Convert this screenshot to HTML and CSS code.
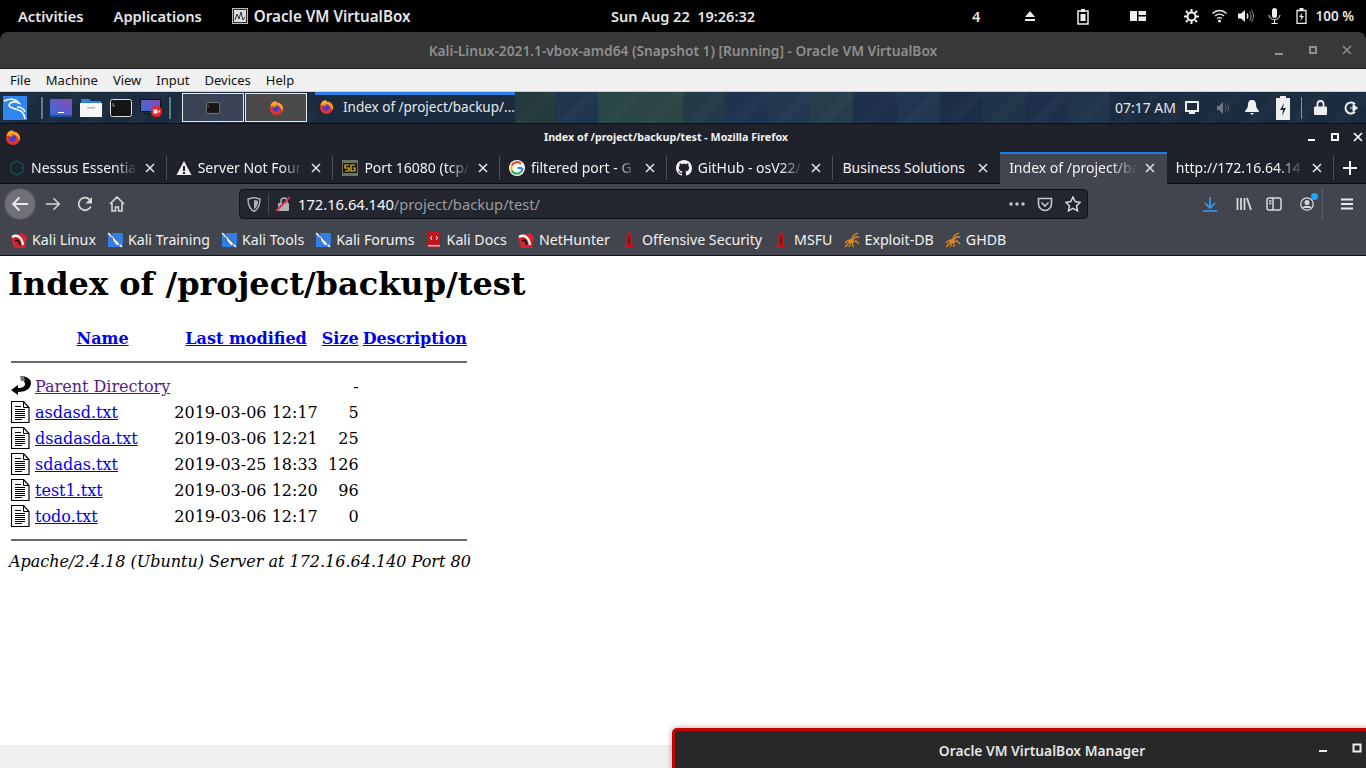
FILE: index.html
```html
<!DOCTYPE html>
<html lang="en">
<head>
<meta charset="UTF-8">
<meta name="viewport" content="width=device-width, initial-scale=1.0">
<title>Index of /project/backup/test</title>
<link rel="stylesheet" href="styles.css">
</head>
<body>

<svg class="defs">
  <symbol id="firefox" viewBox="0 0 16 16">
    <circle cx="8" cy="9" r="7" fill="#e8322f"/>
    <path d="M1.500 7C2 3 5 1 8 1.500 7.500 3 9 3.500 10 3c3 1 5 3.500 5 6 0 1-.3 2-1 3-.5-4-3-6-6-6S3 6 1.500 7z" fill="#f9a825"/>
    <circle cx="7.500" cy="9" r="3.500" fill="#4a3fc4"/>
    <path d="M3 6.500 5 5l3 1-2 2z" fill="#ff8a1f"/>
  </symbol>
  <symbol id="close" viewBox="0 0 10 10">
    <path d="M1 1l8 8M9 1l-8 8" stroke="currentColor" stroke-width="1.600" fill="none"/>
  </symbol>
  <symbol id="kali-red" viewBox="0 0 16 16">
    <path d="M0 5 12 1l4 4-2 11H3z" fill="#d8232a"/>
    <path d="M1 5c5-3 10 0 11 8" stroke="#f4f4f4" stroke-width="2.400" fill="none"/>
    <path d="M4 9c3-2 4 0 5 4" stroke="#1a1a1a" stroke-width="2" fill="none"/>
  </symbol>
  <symbol id="kali-blue" viewBox="0 0 16 16">
    <path d="M3 1h13v12l-2 2H1V4z" fill="#2f7fe6"/>
    <path d="M1 1l14 14" stroke="#fff" stroke-width="1.500"/>
    <path d="M4 1l4 6 5 5-3 2-4-5z" fill="#e8eef5" stroke="#223" stroke-width=".5"/>
  </symbol>
  <symbol id="doc-red" viewBox="0 0 16 16">
    <path d="M2 0h12v16H2z" fill="#c4141b"/>
    <path d="M6 4 4.500 6 6 8M10 4l1.500 2L10 8" stroke="#fff" fill="none"/>
    <path d="M2 13h12v1.500H2z" fill="#f4b6b8"/>
  </symbol>
  <symbol id="rocket" viewBox="0 0 16 16">
    <path d="M8 0c2 1 2.500 3 2.500 5v6l2.500 5H3l2.500-5V5C5.500 3 6 1 8 0z" fill="#c4141b"/>
    <path d="M7.500 4h1v9h-1z" fill="#2a1010"/>
  </symbol>
  <symbol id="spider" viewBox="0 0 16 16">
    <g stroke="#e08a1e" stroke-width="1.300" fill="none">
      <path d="M7 8 10 3l4-2M8 9l3-4 4 0M8 10l4-1 3 3M6 9 3 13l-2 2M7 10l-1 3-1 2M8 10l1 3 0 2M6 8 3 9l-2 2"/>
    </g>
    <ellipse cx="7" cy="9" rx="2.500" ry="2" fill="#e08a1e"/>
  </symbol>
  <symbol id="page-icon" viewBox="0 0 20 22">
    <path d="M.5.500h12l5.500 6v15H.5z" fill="#fff" stroke="#000" stroke-width="1.200"/>
    <path d="M12.500.500v6H18" fill="none" stroke="#000"/>
    <path d="M4 5.500h6M4 8.500h10M4 10.500h10M4 12.500h10M4 14.500h10M4 16.500h10M4 18.500h7" stroke="#000" shape-rendering="crispEdges"/>
  </symbol>
</svg>

<div class="screen">

  <header class="topbar">
    <span class="top-item activities">Activities</span>
    <span class="top-item applications">Applications</span>
    <svg class="app-icon" viewBox="0 0 16 16"><rect x=".5" y=".5" width="15" height="15" fill="#2c2c2c" stroke="#bbb"/><rect x="2" y="2" width="12" height="12" fill="#ddd"/><path d="M3 12l2-6 2 5 2-7 2 8 2-3" stroke="#333" fill="none"/></svg>
    <span class="top-item top-app">Oracle VM VirtualBox</span>
    <span class="clock">Sun Aug 22&nbsp; 19:26:32</span>
    <div class="tray">
      <span class="tray-num">4</span>
      <svg class="tray-eject" width="12" height="12" viewBox="0 0 12 12"><path d="M6 1l5 6H1zM1 9h10v2H1z" fill="#eee"/></svg>
      <svg class="tray-clip" width="12" height="17" viewBox="0 0 12 17"><path d="M1 3h10v13H1z" fill="none" stroke="#eee" stroke-width="1.500"/><path d="M4 1h4v3H4zM3.500 6h5v7h-5z" fill="#eee"/></svg>
      <svg class="tray-layout" width="16" height="10" viewBox="0 0 16 10"><path d="M0 0h7v10H0zM8.500 0H16v4H8.500zM8.500 5.500H16V10H8.500z" fill="#eee"/></svg>
      <svg class="tray-gear" width="15" height="15" viewBox="0 0 15 15"><circle cx="7.500" cy="7.500" r="4" fill="none" stroke="#eee" stroke-width="2"/><path d="M7.500 0v3M7.500 12v3M0 7.500h3M12 7.500h3M2 2l2 2M11 11l2 2M13 2l-2 2M4 11l-2 2" stroke="#eee" stroke-width="2"/></svg>
      <svg class="tray-wifi" width="15" height="14" viewBox="0 0 15 14"><path d="M.5 4.500c4-4 10-4 14 0M3 7c3-2.500 6-2.500 9 0M5 9.500c1.500-1 3.500-1 5 0" stroke="#eee" stroke-width="1.300" fill="none"/><circle cx="7.500" cy="12" r="1.500" fill="#eee"/></svg>
      <svg class="tray-vol" width="16" height="14" viewBox="0 0 16 14"><path d="M0 4.500h3L7 1v12L3 9.500H0z" fill="#eee"/><path d="M9 4.500c1 1.500 1 3.500 0 5" stroke="#eee" stroke-width="1.300" fill="none"/><path d="M11.500 2.500c2 2.500 2 6.500 0 9M13.500 1c2.500 3.500 2.500 8.500 0 12" stroke="#777" stroke-width="1.200" fill="none"/></svg>
      <svg class="tray-mic" width="13" height="16" viewBox="0 0 13 16"><rect x="4" y="0" width="5" height="10" rx="2.500" fill="#eee"/><path d="M1 7c0 6 11 6 11 0M6.500 12v3M3.500 15.500h6" stroke="#eee" fill="none"/></svg>
      <svg class="tray-batt" width="11" height="16" viewBox="0 0 11 16"><path d="M1 2.500h9v13H1z" fill="none" stroke="#eee" stroke-width="1.300"/><path d="M3.500 0h4v2h-4zM6.500 4.500 3 9h2.500L4.500 13 8 8H5.500z" fill="#eee"/></svg>
      <span class="tray-pct">100 %</span>
    </div>
  </header>

  <div class="vbox-title">
    <span class="vbox-name">Kali-Linux-2021.1-vbox-amd64 (Snapshot 1) [Running] - Oracle VM VirtualBox</span>
    <div class="vbox-buttons">
      <svg width="10" height="10" viewBox="0 0 10 10"><path d="M1 8h8v2H1z" fill="#8f8f8f"/></svg>
      <svg width="10" height="10" viewBox="0 0 10 10"><path d="M2 2h6v6H2z" fill="none" stroke="#8f8f8f" stroke-width="2"/></svg>
      <svg width="10" height="10" viewBox="0 0 10 10" class="grey-x"><use href="#close"/></svg>
    </div>
  </div>

  <nav class="vbox-menu">
    <span>File</span><span>Machine</span><span>View</span><span>Input</span><span>Devices</span><span>Help</span>
  </nav>

  <div class="kali-panel">
    <svg class="kali-logo" viewBox="0 0 24 24"><rect width="24" height="24" fill="#2f86f0"/><path d="M1 5c6-3 12-2 15 2-5-2-9-1-10 2 0 4 9 3 13 7 2 2 3 5 3 7M14 11c4 0 7 2 8 5" stroke="#fff" stroke-width="1.600" fill="none"/></svg>
    <span class="panel-sep"></span>
    <svg class="launcher" viewBox="0 0 22 18"><defs><linearGradient id="scr" x1="0" y1="1" x2="1" y2="0"><stop offset="0" stop-color="#2f6fd8"/><stop offset="1" stop-color="#8a4bb8"/></linearGradient></defs><rect width="22" height="17" fill="url(#scr)"/><rect y="16" width="22" height="2" fill="#1d4fa0"/><path d="M8 13h6v1H8z" fill="#fff"/></svg>
    <svg class="launcher" viewBox="0 0 22 18"><path d="M1 0h8l2 2h10v4H1z" fill="#2f7fe6"/><path d="M0 4h22v14H0z" fill="#f6f6f6"/><path d="M7 8h8v1.500H7z" fill="#bbb"/></svg>
    <svg class="launcher" viewBox="0 0 22 18"><rect x=".5" y=".5" width="21" height="17" rx="2" fill="#151515" stroke="#ddd"/><path d="M3 4v3h2" stroke="#999" fill="none"/></svg>
    <svg class="launcher" viewBox="0 0 22 18"><rect x=".5" y=".5" width="20" height="12" fill="url(#scr)" stroke="#111"/><path d="M4 14h10v1H4z" fill="#111"/><circle cx="16.500" cy="12.500" r="5.500" fill="#e8232a"/><path d="M13.500 10.500h4v4h-4zM18 12.500l2-1.500v3z" fill="#fff"/></svg>
    <span class="panel-sep second"></span>
    <div class="task-btn">
      <svg width="14" height="12" viewBox="0 0 22 18"><rect x=".5" y=".5" width="21" height="17" rx="2" fill="#151515" stroke="#aaa"/><path d="M3 4v3h2" stroke="#999" fill="none"/></svg>
    </div>
    <div class="task-btn fox">
      <svg width="15" height="15"><use href="#firefox"/></svg>
    </div>
    <div class="task-window">
      <svg width="15" height="15"><use href="#firefox"/></svg>
      <span>Index of /project/backup/...</span>
    </div>
    <div class="panel-right">
      <span class="panel-clock">07:17 AM</span>
      <svg class="pr-net" width="14" height="13" viewBox="0 0 14 13"><path d="M1 1h12v9H1zM4 12h6" fill="none" stroke="#eee" stroke-width="2"/></svg>
      <svg class="pr-vol" width="14" height="14" viewBox="0 0 14 14"><path d="M1 5h2l4-4v12L3 9H1z" fill="#6d7885"/><path d="M9 4c1.500 2 1.500 4 0 6M11 2.500c2 3 2 6 0 9" stroke="#55606d" fill="none"/></svg>
      <svg class="pr-bell" width="14" height="15" viewBox="0 0 14 15"><path d="M7 0c3 0 4 2 4 5 0 3 2 5 3 6v1H0v-1c1-1 3-3 3-6 0-3 1-5 4-5zM5 13h4l-2 2z" fill="#f2f2f2"/></svg>
      <svg class="pr-batt" width="14" height="24" viewBox="0 0 14 24"><path d="M4 0h6v2h4v22H0V2h4z" fill="#eee"/><path d="M8 7 4 14h3l-1 6 4-8H7z" fill="#1d2d40"/></svg>
      <span class="pr-sep"></span>
      <svg class="pr-lock" width="13" height="15" viewBox="0 0 13 15"><path d="M3.500 7V4a3 3 0 016 0v3" fill="none" stroke="#eee" stroke-width="1.800"/><rect y="6.500" width="13" height="8.500" rx="1" fill="#eee"/></svg>
      <svg class="pr-power" width="14" height="14" viewBox="0 0 14 14"><path d="M11 3.200A5.500 5.500 0 1 0 11 10.800" fill="none" stroke="#eee" stroke-width="2"/><path d="M6 7h5M9 3.500 13.500 7 9 10.500z" fill="#eee" stroke="#eee"/></svg>
    </div>
  </div>

  <div class="ff-title">
    <svg class="ff-logo" width="16" height="16"><use href="#firefox"/></svg>
    <span class="ff-name">Index of /project/backup/test - Mozilla Firefox</span>
    <div class="ff-buttons">
      <svg width="10" height="10" viewBox="0 0 10 10"><path d="M1 7h7v2H1z" fill="#fff"/></svg>
      <svg width="10" height="10" viewBox="0 0 10 10"><path d="M2 2h6v6H2z" fill="none" stroke="#fff" stroke-width="2"/></svg>
      <svg width="10" height="10" viewBox="0 0 10 10" class="white-x"><use href="#close"/></svg>
    </div>
  </div>

  <div class="tabbar">
    <div class="tab">
      <svg class="tab-icon" viewBox="0 0 16 16"><path d="M8 1l6 3.500v7L8 15l-6-3.500v-7z" fill="none" stroke="#0f5468" stroke-width="1.300"/></svg>
      <span class="tab-label">Nessus Essentia</span>
      <svg class="tab-close"><use href="#close"/></svg>
    </div>
    <div class="tab">
      <svg class="tab-icon" viewBox="0 0 16 16"><path d="M8 1l7.500 14H.5z" fill="#f2f2f2"/><path d="M7 6h2v5H7zM7 12h2v2H7z" fill="#1f222b"/></svg>
      <span class="tab-label">Server Not Foun</span>
      <svg class="tab-close"><use href="#close"/></svg>
    </div>
    <div class="tab">
      <svg class="tab-icon" viewBox="0 0 16 16"><rect width="16" height="16" fill="#6b7266"/><rect x="1" y="3" width="14" height="10" fill="#16180f"/><path d="M7 5H3v3h4v3H3M13 5H9v6h4V8h-2" stroke="#f0c020" stroke-width="1.200" fill="none"/></svg>
      <span class="tab-label">Port 16080 (tcp/</span>
      <svg class="tab-close"><use href="#close"/></svg>
    </div>
    <div class="tab">
      <svg class="tab-icon" viewBox="0 0 16 16"><circle cx="8" cy="8" r="8" fill="#fff"/><path d="M13 8H8.500" stroke="#4285f4" stroke-width="2.200"/><path d="M12 3.800A5.700 5.700 0 002.800 5.500" stroke="#ea4335" stroke-width="2.200" fill="none"/><path d="M2.800 5.500a5.700 5.700 0 000 5" stroke="#fbbc05" stroke-width="2.200" fill="none"/><path d="M2.800 10.500A5.700 5.700 0 0012 12" stroke="#34a853" stroke-width="2.200" fill="none"/><path d="M12 12a5.700 5.700 0 001.500-4" stroke="#4285f4" stroke-width="2.200" fill="none"/></svg>
      <span class="tab-label">filtered port - G</span>
      <svg class="tab-close"><use href="#close"/></svg>
    </div>
    <div class="tab">
      <svg class="tab-icon" viewBox="0 0 16 16"><path fill="#f2f2f2" d="M8 0C3.580 0 0 3.580 0 8c0 3.540 2.290 6.530 5.470 7.590.4.070.55-.17.550-.38 0-.19-.01-.82-.01-1.490-2.010.37-2.530-.49-2.690-.94-.09-.23-.48-.94-.82-1.130-.28-.15-.68-.52-.01-.53.630-.01 1.080.58 1.230.82.720 1.210 1.870.87 2.330.66.070-.52.280-.87.510-1.070-1.780-.2-3.640-.89-3.640-3.950 0-.87.310-1.590.820-2.150-.08-.2-.36-1.020.08-2.120 0 0 .67-.21 2.200.82.640-.18 1.320-.27 2-.27s1.360.09 2 .27c1.530-1.040 2.200-.82 2.200-.82.440 1.100.16 1.920.08 2.120.51.560.82 1.270.82 2.150 0 3.070-1.870 3.750-3.650 3.950.29.250.54.730.54 1.480 0 1.070-.01 1.930-.01 2.200 0 .21.150.46.550.38A8.010 8.010 0 0016 8c0-4.420-3.580-8-8-8z"/></svg>
      <span class="tab-label">GitHub - osV22/</span>
      <svg class="tab-close"><use href="#close"/></svg>
    </div>
    <div class="tab">
      <span class="tab-label plain">Business Solutions</span>
      <svg class="tab-close"><use href="#close"/></svg>
    </div>
    <div class="tab active">
      <span class="tab-label">Index of /project/ba</span>
      <svg class="tab-close"><use href="#close"/></svg>
    </div>
    <div class="tab">
      <span class="tab-label">http://172.16.64.14</span>
      <svg class="tab-close"><use href="#close"/></svg>
    </div>
    <svg class="new-tab" width="14" height="14" viewBox="0 0 14 14"><path d="M7 0v14M0 7h14" stroke="#f2f2f2" stroke-width="2"/></svg>
  </div>

  <div class="navbar">
    <div class="back-btn">
      <svg width="18" height="16" viewBox="0 0 18 16"><path d="M17 8H2M8.500 1.500 2 8l6.500 6.500" stroke="#e8e8e8" stroke-width="1.800" fill="none"/></svg>
    </div>
    <svg class="nav-icon" viewBox="0 0 18 16"><path d="M1 8h15M9.500 1.500 16 8l-6.500 6.500" stroke="#d8d8d8" stroke-width="1.700" fill="none"/></svg>
    <svg class="nav-icon" viewBox="0 0 16 16"><path d="M13.800 10.500A6.300 6.300 0 1 1 12.500 3.500" stroke="#d8d8d8" stroke-width="1.800" fill="none"/><path d="M15 1v6.500H8.500z" fill="#d8d8d8"/></svg>
    <svg class="nav-icon" viewBox="0 0 16 16"><path d="M1 8l7-7 7 7M3 7v8h3.500v-4h3v4H13V7" stroke="#d8d8d8" stroke-width="1.600" fill="none"/></svg>
    <div class="urlbar">
      <svg class="shield" width="14" height="15" viewBox="0 0 14 15"><path d="M1 2l6-1.500L13 2c0 6-1.500 10-6 12.500C2.500 12 1 8 1 2z" fill="none" stroke="#b1b1b3" stroke-width="1.500"/><path d="M7 3l4 .8c0 4-1 6.500-4 8.500z" fill="#b1b1b3"/></svg>
      <span class="url-sep"></span>
      <svg class="lock" width="16" height="16" viewBox="0 0 16 16"><path d="M6 7V5a3 3 0 016 0v2" fill="none" stroke="#b1b1b3" stroke-width="1.500"/><rect x="3" y="7" width="11" height="8" rx="1" fill="#b1b1b3"/><path d="M1 15 15 1" stroke="#e22850" stroke-width="2"/></svg>
      <span class="url"><b>172.16.64.140</b>/project/backup/test/</span>
      <svg class="url-dots" width="16" height="4" viewBox="0 0 16 4"><circle cx="2" cy="2" r="1.700" fill="#c8c8c8"/><circle cx="8" cy="2" r="1.700" fill="#c8c8c8"/><circle cx="14" cy="2" r="1.700" fill="#c8c8c8"/></svg>
      <svg class="pocket" width="16" height="15" viewBox="0 0 16 15"><path d="M1.500 1.500h13v5c0 4-3 7-6.500 7s-6.500-3-6.500-7z" fill="none" stroke="#c8c8c8" stroke-width="1.600"/><path d="M4.500 5.500 8 9l3.500-3.500" fill="none" stroke="#c8c8c8" stroke-width="1.600"/></svg>
      <svg class="star" width="16" height="16" viewBox="0 0 16 16"><path d="M8 1l2.200 4.600 5 .7-3.600 3.500.9 5L8 12.400l-4.500 2.400.9-5L.8 6.300l5-.7z" fill="none" stroke="#d8d8d8" stroke-width="1.500"/></svg>
    </div>
    <svg class="tool-download" width="16" height="16" viewBox="0 0 16 16"><path d="M8 1v10M3 7l5 5 5-5M1 15h14" stroke="#3d9cf5" stroke-width="1.700" fill="none"/></svg>
    <svg class="tool-lib" width="16" height="14" viewBox="0 0 16 14"><path d="M1.500 1v12M5 1v12M8.500 1v12M11 1l4 12" stroke="#d8d8d8" stroke-width="1.800" fill="none"/></svg>
    <svg class="tool-side" width="16" height="14" viewBox="0 0 16 14"><rect x="1" y="1" width="14" height="12" rx="2" fill="none" stroke="#d8d8d8" stroke-width="1.500"/><path d="M7 1v12M3 4h2.500M3 6.500h2.500" stroke="#d8d8d8" stroke-width="1.500"/></svg>
    <div class="tool-account">
      <svg width="14" height="14" viewBox="0 0 14 14"><circle cx="7" cy="7" r="6.200" fill="none" stroke="#d8d8d8" stroke-width="1.300"/><circle cx="7" cy="5.500" r="2.500" fill="#d8d8d8"/><path d="M2.500 11c1-3 8-3 9 0" fill="#d8d8d8"/></svg>
      <span class="account-dot"></span>
    </div>
    <span class="nav-sep"></span>
    <svg class="tool-menu" width="12" height="12" viewBox="0 0 12 12"><path d="M0 1.500h12M0 6h12M0 10.500h12" stroke="#e8e8e8" stroke-width="1.800"/></svg>
  </div>

  <div class="bookmarks">
    <a class="bm"><svg><use href="#kali-red"/></svg>Kali Linux</a>
    <a class="bm"><svg><use href="#kali-blue"/></svg>Kali Training</a>
    <a class="bm"><svg><use href="#kali-blue"/></svg>Kali Tools</a>
    <a class="bm"><svg><use href="#kali-blue"/></svg>Kali Forums</a>
    <a class="bm"><svg><use href="#doc-red"/></svg>Kali Docs</a>
    <a class="bm"><svg><use href="#kali-red"/></svg>NetHunter</a>
    <a class="bm"><svg><use href="#rocket"/></svg>Offensive Security</a>
    <a class="bm"><svg><use href="#rocket"/></svg>MSFU</a>
    <a class="bm"><svg><use href="#spider"/></svg>Exploit-DB</a>
    <a class="bm"><svg><use href="#spider"/></svg>GHDB</a>
  </div>

  <main class="page">
    <h1>Index of /project/backup/test</h1>
    <table>
      <tr>
        <th><span class="blank"></span></th>
        <th><a href="#">Name</a></th>
        <th><a href="#">Last modified</a></th>
        <th><a href="#">Size</a></th>
        <th><a href="#">Description</a></th>
      </tr>
      <tr><th colspan="5"><hr></th></tr>
      <tr>
        <td>
          <svg class="file-icon" viewBox="0 0 20 22"><path d="M0 15 7 10v3c4 0 7-1 7-4 0-2-2-4-4-5l2-3c4 1 8 3 8 7 0 6-6 9-13 9v3z" fill="#000"/><path d="M9 1h4l1 5h-4z" fill="#777"/></svg>
        </td>
        <td><a class="seen" href="#">Parent Directory</a></td>
        <td></td>
        <td class="num">-</td>
        <td></td>
      </tr>
      <tr>
        <td><svg class="file-icon"><use href="#page-icon"/></svg></td>
        <td><a href="#">asdasd.txt</a></td>
        <td class="num">2019-03-06 12:17</td>
        <td class="num">5</td>
        <td></td>
      </tr>
      <tr>
        <td><svg class="file-icon"><use href="#page-icon"/></svg></td>
        <td><a href="#">dsadasda.txt</a></td>
        <td class="num">2019-03-06 12:21</td>
        <td class="num">25</td>
        <td></td>
      </tr>
      <tr>
        <td><svg class="file-icon"><use href="#page-icon"/></svg></td>
        <td><a href="#">sdadas.txt</a></td>
        <td class="num">2019-03-25 18:33</td>
        <td class="num">126</td>
        <td></td>
      </tr>
      <tr>
        <td><svg class="file-icon"><use href="#page-icon"/></svg></td>
        <td><a href="#">test1.txt</a></td>
        <td class="num">2019-03-06 12:20</td>
        <td class="num">96</td>
        <td></td>
      </tr>
      <tr>
        <td><svg class="file-icon"><use href="#page-icon"/></svg></td>
        <td><a href="#">todo.txt</a></td>
        <td class="num">2019-03-06 12:17</td>
        <td class="num">0</td>
        <td></td>
      </tr>
      <tr><th colspan="5"><hr></th></tr>
    </table>
    <address>Apache/2.4.18 (Ubuntu) Server at 172.16.64.140 Port 80</address>
  </main>

  <div class="bottom-strip"></div>

  <!-- second desktop window, sits over the guest -->
  <div class="manager-window">
    <span class="manager-title">Oracle VM VirtualBox Manager</span>
    <div class="manager-buttons">
      <svg width="10" height="10" viewBox="0 0 10 10"><path d="M1 7h8v2H1z" fill="#eee"/></svg>
      <svg width="10" height="10" viewBox="0 0 10 10"><path d="M1.500 1.500h7v7h-7z" fill="none" stroke="#eee" stroke-width="2"/></svg>
    </div>
  </div>

</div>

</body>
</html>
```

FILE: styles.css
```css
* {
    box-sizing: border-box;
}

html, body {
    margin: 0;
    padding: 0;
    height: 100%;
    overflow: hidden;
}

body {
    font-family: "Noto Sans", sans-serif;
    background: #000;
}

.defs {
    display: none;
}

.screen {
    position: relative;
    width: 1366px;
    height: 768px;
    overflow: hidden;
    display: flex;
    flex-direction: column;
}

/* gnome top bar */
.topbar {
    height: 32px;
    flex: none;
    background: #000;
    color: #e6e6e6;
    display: flex;
    align-items: center;
    font-size: 14.7px;
    font-weight: 600;
    padding-left: 18px;
    position: relative;
}

.applications {
    margin-left: 30px;
}

.app-icon {
    width: 16px;
    height: 16px;
    margin-left: 30px;
    margin-right: 6px;
}

.top-app {
    font-size: 15.2px;
}

.clock {
    position: absolute;
    left: 611px;
    font-size: 14.5px;
    white-space: nowrap;
}

.tray {
    margin-left: auto;
    display: flex;
    align-items: center;
    padding-right: 12px;
}

.tray-num { margin-right: 43px; }
.tray-eject { margin-right: 41px; }
.tray-clip { margin-right: 41px; }
.tray-layout { margin-right: 38px; }
.tray-gear { margin-right: 13px; }
.tray-wifi { margin-right: 11px; }
.tray-vol { margin-right: 14px; }
.tray-mic { margin-right: 15px; }
.tray-batt { margin-right: 9px; }
.tray-pct { font-size: 13.5px; }

/* virtualbox window */
.vbox-title {
    height: 37px;
    flex: none;
    background: #383838;
    border-radius: 8px 8px 0 0;
    border-bottom: 1px solid #1f1f1f;
    color: #8f8f8f;
    display: flex;
    align-items: center;
    justify-content: center;
    font-size: 13.75px;
    font-weight: 600;
    position: relative;
}

.vbox-buttons {
    position: absolute;
    right: 14px;
    top: 13px;
    display: flex;
    gap: 24px;
}

.grey-x {
    color: #8f8f8f;
}

.vbox-menu {
    height: 23px;
    flex: none;
    background: #f0f0f0;
    color: #111;
    font-size: 13px;
    display: flex;
    align-items: center;
    gap: 15px;
    padding-left: 10px;
    border-bottom: 1px solid #d0d0d0;
}

/* xfce panel inside the guest */
.kali-panel {
    height: 32px;
    flex: none;
    display: flex;
    align-items: center;
    padding-left: 3px;
    border-bottom: 1px solid #0c0f14;
    background:
        repeating-linear-gradient(135deg, transparent 0 20px, rgba(255, 255, 255, 0.02) 20px 30.400px),
        linear-gradient(90deg,
            #1c2c3f 0 515px,
            #243a3d 515px 555px,
            #20364f 555px 598px,
            #294544 598px 640px,
            #2c4646 640px 683px,
            #233a48 683px 725px,
            #1f3350 725px 767px,
            #213850 767px 810px,
            #263e4c 810px 853px,
            #1e2f4c 853px 897px,
            #213650 897px 940px,
            #1c2d48 940px 982px,
            #203449 982px 1025px,
            #1d2f4a 1025px 1068px,
            #20354c 1068px 1110px,
            #1b2b40 1110px);
    color: #e8e8e8;
}

.kali-logo {
    width: 24px;
    height: 24px;
}

.panel-sep {
    width: 2px;
    height: 22px;
    background: #6c7886;
    margin-left: 14px;
    margin-right: 7px;
}

.panel-sep.second {
    margin-left: 7px;
    margin-right: 11px;
}

.launcher {
    width: 22px;
    height: 18px;
    margin-right: 8px;
}

.launcher:last-of-type {
    margin-right: 0;
}

.task-btn {
    width: 62px;
    height: 29px;
    border: 1px solid #e6e6e6;
    background: #3a4456;
    display: flex;
    align-items: center;
    justify-content: center;
    margin-right: 1px;
}

.task-btn.fox {
    background: #4a4a4a;
}

.task-window {
    width: 200px;
    height: 31px;
    margin-left: 7px;
    border-top: 3px solid #2f7fe6;
    background: #1b2b3e;
    display: flex;
    align-items: center;
    gap: 9px;
    padding-left: 4px;
    padding-bottom: 5px;
    font-size: 13.500px;
    white-space: nowrap;
    overflow: hidden;
    align-self: flex-start;
}

.task-window svg {
    flex: none;
}

.panel-right {
    margin-left: auto;
    display: flex;
    align-items: center;
    font-size: 14px;
    padding-right: 8px;
}

.panel-clock { margin-right: 9px; }
.pr-net { margin-right: 17px; }
.pr-vol { margin-right: 15px; }
.pr-bell { margin-right: 17px; }
.pr-batt { margin-right: 11px; }

.pr-sep {
    width: 1px;
    height: 22px;
    background: #8a94a0;
    margin-right: 12px;
}

.pr-lock { margin-right: 17px; }

/* firefox chrome */
.ff-title {
    height: 28px;
    flex: none;
    background: #1f222b;
    color: #f2f2f2;
    font-size: 10.700px;
    font-weight: 700;
    display: flex;
    align-items: center;
    justify-content: center;
    padding-right: 34px;
    padding-bottom: 3px;
    position: relative;
}

.ff-logo {
    position: absolute;
    left: 5px;
    top: 5px;
}

.ff-buttons {
    position: absolute;
    right: 3px;
    top: 8px;
    display: flex;
    gap: 13px;
}

.white-x {
    color: #fff;
}

.tabbar {
    height: 32px;
    flex: none;
    background: #1f222b;
    display: flex;
    align-items: stretch;
    border-bottom: 1px solid #0c0d11;
    color: #f2f2f2;
    font-size: 14px;
}

.tab {
    width: 166.700px;
    flex: none;
    display: flex;
    align-items: center;
    padding-left: 9px;
    padding-right: 12px;
    position: relative;
}

.tab::after {
    content: "";
    position: absolute;
    right: 0;
    top: 4px;
    height: 24px;
    width: 1px;
    background: #4a4d55;
}

.tab:nth-child(6)::after, .tab.active::after {
    display: none;
}

.tab.active {
    background: #42454d;
    border-top: 2px solid #1c7fe8;
    padding-bottom: 3px;
    margin-bottom: -1px;
}

.tab-icon {
    width: 16px;
    height: 16px;
    flex: none;
    margin-right: 6px;
}

.tab-label {
    flex: 1;
    min-width: 0;
    white-space: nowrap;
    -webkit-mask-image: linear-gradient(90deg, #000 80%, transparent 100%);
    mask-image: linear-gradient(90deg, #000 80%, transparent 100%);
}

.tab-label.plain {
    -webkit-mask-image: none;
    mask-image: none;
}

.tab-close {
    width: 10px;
    height: 10px;
    flex: none;
    margin-left: 8px;
    color: #e0e0e0;
}

.new-tab {
    align-self: center;
    margin-left: 9px;
}

.navbar {
    height: 40px;
    flex: none;
    background: #42454d;
    display: flex;
    align-items: center;
    padding-left: 4px;
}

.back-btn {
    width: 32px;
    height: 32px;
    border-radius: 50%;
    background: #6f7177;
    border: 1px solid #55575d;
    display: flex;
    align-items: center;
    justify-content: center;
    margin-right: 9px;
}

.nav-icon {
    width: 16px;
    height: 16px;
    margin-right: 16px;
}

.urlbar {
    width: 849px;
    height: 30px;
    margin-left: 98px;
    background: #23252f;
    border: 1px solid #111216;
    border-radius: 4px;
    display: flex;
    align-items: center;
    font-size: 14.700px;
    padding-left: 7px;
}

.url-sep {
    width: 1px;
    height: 20px;
    background: #4a4d55;
    margin-left: 7px;
    margin-right: 6px;
}

.lock {
    margin-right: 7px;
}

.url {
    color: #9a9ba0;
    flex: 1;
}

.url b {
    color: #f9f9fa;
    font-weight: 400;
}

.url-dots { margin-right: 12px; }
.pocket { margin-right: 12px; }
.star { margin-right: 6px; }

.tool-download { margin-left: 114px; }
.tool-lib { margin-left: 18px; }
.tool-side { margin-left: 14px; }

.tool-account {
    margin-left: 18px;
    position: relative;
    display: flex;
}

.account-dot {
    position: absolute;
    right: -4px;
    top: -4px;
    width: 7px;
    height: 7px;
    border-radius: 50%;
    background: #1aa7ff;
}

.nav-sep {
    width: 1px;
    height: 32px;
    background: #5d6068;
    margin-left: 8px;
}

.tool-menu {
    margin-left: 18px;
}

.bookmarks {
    height: 32px;
    flex: none;
    background: #42454d;
    border-bottom: 1px solid #111216;
    display: flex;
    align-items: center;
    gap: 11px;
    padding-left: 11px;
    color: #f2f2f2;
    font-size: 14.200px;
}

.bm {
    display: flex;
    align-items: center;
    gap: 5px;
    white-space: nowrap;
}

.bm svg {
    width: 16px;
    height: 16px;
    flex: none;
}

/* the directory listing */
.page {
    flex: 1;
    min-height: 0;
    background: #fff;
    color: #000;
    padding: 9px 8px 8px;
    font-family: "DejaVu Serif", serif;
    font-size: 16px;
}

.page h1 {
    font-size: 32px;
    margin: 0 0 21.440px;
}

.page a {
    color: #00e;
    text-decoration: underline;
}

.page a.seen {
    color: #551a8b;
}

.page td {
    vertical-align: middle;
    padding: 1px;
}

.page th {
    padding: 1px;
}

.page hr {
    height: 2px;
    border: 0;
    background: #6a6a6a;
    margin: 8px 0;
}

.num {
    text-align: right;
}

.blank {
    display: block;
    width: 20px;
    height: 22px;
}

.file-icon {
    display: block;
    width: 20px;
    height: 22px;
}

.page address {
    font-style: italic;
    margin-left: 1px;
}

.bottom-strip {
    height: 23px;
    flex: none;
    background: #f0f0f0;
}

.manager-window {
    position: absolute;
    left: 672px;
    top: 728px;
    width: 700px;
    height: 44px;
    background: #282828;
    border: 3px solid #c80000;
    border-radius: 5px 5px 0 0;
    box-shadow: 0 0 6px rgba(0, 0, 0, 0.35);
    color: #e6e6e6;
    font-size: 13.800px;
    font-weight: 600;
    display: flex;
    justify-content: center;
    padding-top: 10px;
    padding-left: 40px;
}

.manager-buttons {
    position: absolute;
    left: 643px;
    top: 12px;
    display: flex;
    gap: 24px;
}
```
